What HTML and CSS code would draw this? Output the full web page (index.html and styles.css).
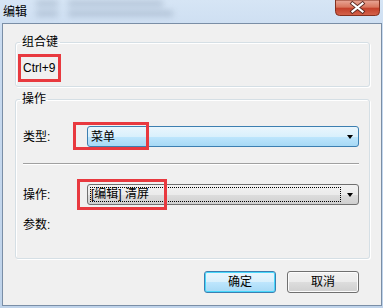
FILE: index.html
```html
<!DOCTYPE html>
<html>
<head>
<meta charset="utf-8">
<link rel="stylesheet" href="styles.css">
</head>
<body>
<div class="window">
  <div class="titlebar">
    <span class="title">编辑</span>
    <div class="ghosts">
      <div class="ghost-col g-a"><span></span><span></span></div>
      <div class="ghost-col g-b"><span></span><span></span></div>
    </div>
    <div class="close">
      <svg width="45" height="16" viewBox="0 0 45 16">
        <defs>
          <linearGradient id="cg" x1="0" y1="0" x2="0" y2="1">
            <stop offset="0" stop-color="#e9a999"/>
            <stop offset="0.45" stop-color="#d9775f"/>
            <stop offset="0.55" stop-color="#c4412b"/>
            <stop offset="1" stop-color="#d5654d"/>
          </linearGradient>
        </defs>
        <path d="M0.5 0 V11.5 Q0.5 15.5 4.5 15.5 H40.5 Q44.5 15.5 44.5 11.5 V0 Z" fill="url(#cg)" stroke="#83311f"/>
        <path d="M17.5 3.5 L27.5 11.5 M27.5 3.5 L17.5 11.5" stroke="#5a2a22" stroke-width="4" stroke-linecap="square"/>
        <path d="M17.5 3.5 L27.5 11.5 M27.5 3.5 L17.5 11.5" stroke="#ffffff" stroke-width="2.2" stroke-linecap="square"/>
      </svg>
    </div>
  </div>
  <div class="client">
    <fieldset class="group g1">
      <legend>组合键</legend>
      <div class="keys">Ctrl+9</div>
    </fieldset>
    <fieldset class="group g2">
      <legend>操作</legend>
      <div class="row first">
        <span class="label">类型:</span>
        <div class="combo blue"><span class="ctext">菜单</span><span class="arrow"></span></div>
      </div>
      <div class="sep"></div>
      <div class="row second">
        <span class="label">操作:</span>
        <div class="combo gray"><span class="focus">[编辑] 清屏</span><span class="arrow"></span></div>
      </div>
      <div class="row third">
        <span class="label">参数:</span>
      </div>
    </fieldset>
    <div class="buttons">
      <button class="btn default">确定</button>
      <button class="btn">取消</button>
    </div>
  </div>
  <div class="mark m1"></div>
  <div class="mark m2"></div>
  <div class="mark m3"></div>
</div>
</body>
</html>
```

FILE: styles.css
```css
* { box-sizing: border-box; }
html, body { margin: 0; padding: 0; }
body {
  width: 383px;
  height: 308px;
  overflow: hidden;
  font-family: "Liberation Sans", "Noto Sans CJK SC", sans-serif;
  font-size: 12px;
  color: #000;
}
.window {
  position: relative;
  width: 383px;
  height: 308px;
  background: linear-gradient(to bottom, #d6e5f5 0px, #c9dbf0 40px, #bfd3ea 100%);
  overflow: hidden;
}
.titlebar {
  height: 23px;
  display: flex;
  align-items: flex-start;
}
.title {
  padding: 5px 0 0 3px;
  line-height: 14px;
  height: 19px;
  width: 32px;
}
.ghosts {
  flex: 1;
  display: flex;
  gap: 10px;
  padding-top: 1px;
  filter: blur(3px);
  opacity: 0.55;
}
.ghost-col { display: flex; flex-direction: column; gap: 5px; }
.ghost-col span { display: block; height: 5px; background: #8d9fb5; }
.g-a { width: 22px; margin-left: 4px; }
.g-b { width: 105px; }
.g-b span:first-child { width: 95px; }
.close {
  width: 45px;
  height: 16px;
  margin-right: 3px;
}
.close svg { display: block; }

.client {
  margin-left: 2px;
  width: 380px;
  height: 283px;
  border: 1px solid #7a8ea6;
  background: #f0f0f0;
  padding: 11px 11px 0 12px;
}
.group {
  margin: 0;
  padding: 0 10px 0 7px;
  border: 1px solid #d5dfe5;
  border-radius: 3px;
  box-shadow: inset 1px 1px 0 #fff, 1px 1px 0 #fff;
  min-width: 0;
}
.group legend {
  padding: 0 2px;
  margin-left: -3px;
  line-height: 14px;
  height: 14px;
}
.g1 { height: 52px; }
.keys {
  font-family: "Liberation Sans", sans-serif;
  font-size: 12px;
  line-height: 14px;
  height: 14px;
  margin-top: 12px;
}
.g2 {
  margin-top: 5px;
  height: 167px;
}
.row {
  display: flex;
  align-items: center;
  height: 21px;
}
.row.first { margin-top: 20px; }
.row.second { margin-top: 19px; }
.row.third { margin-top: 13px; height: 14px; }
.label {
  width: 64px;
  line-height: 14px;
}
.combo {
  width: 272px;
  height: 21px;
  border-radius: 3px;
  display: flex;
  align-items: center;
  padding: 0 0 0 2px;
  position: relative;
}
.combo.blue {
  border: 1px solid #3c7fb1;
  background: linear-gradient(to bottom, #eaf6fd 0%, #d9f0fc 50%, #bee6fd 51%, #a7d9f5 100%);
}
.combo.gray {
  border: 1px solid #707070;
  background: linear-gradient(to bottom, #f2f2f2 0%, #ebebeb 50%, #dddddd 51%, #cfcfcf 100%);
}
.ctext { flex: 1; line-height: 14px; padding-left: 1px; }
.focus {
  flex: 0 0 251px;
  height: 15px;
  line-height: 13px;
  border: 1px dotted #000;
  padding-left: 0;
}
.arrow {
  margin-left: auto;
  margin-right: 5px;
  width: 0;
  height: 0;
  border-left: 3.5px solid transparent;
  border-right: 3.5px solid transparent;
  border-top: 4px solid #000;
}
.sep {
  margin-top: 16px;
  height: 2px;
  width: 336px;
  border-top: 1px solid #a0a0a0;
  border-bottom: 1px solid #ffffff;
}
.buttons {
  display: flex;
  justify-content: flex-end;
  gap: 11px;
  margin-top: 12px;
  padding-right: 11px;
}
.btn {
  width: 72px;
  height: 22px;
  margin: 0;
  padding: 0;
  font-family: "Liberation Sans", "Noto Sans CJK SC", sans-serif;
  font-size: 12px;
  line-height: 14px;
  color: #000;
  border: 1px solid #707070;
  border-radius: 3px;
  background: linear-gradient(to bottom, #f2f2f2 0%, #ebebeb 50%, #dddddd 51%, #cfcfcf 100%);
  box-shadow: inset 0 0 0 1px #fcfcfc;
}
.btn.default {
  border-color: #3c7fb1;
  background: linear-gradient(to bottom, #eaf6fd 0%, #d9f0fc 50%, #bee6fd 51%, #a7d9f5 100%);
  box-shadow: inset 0 0 0 1px #48d8fb;
}
.mark {
  position: absolute;
  border: 3px solid #e8393f;
}
.m1 { left: 18px; top: 54px; width: 43px; height: 28px; }
.m2 { left: 73px; top: 122px; width: 76px; height: 28px; }
.m3 { left: 77px; top: 179px; width: 90px; height: 31px; }
```
